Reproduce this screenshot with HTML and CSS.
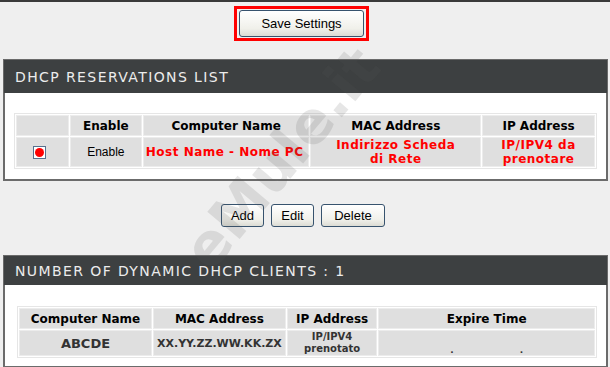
FILE: index.html
```html
<!DOCTYPE html>
<html lang="en">
<head>
    <meta charset="UTF-8">
    <title>DHCP Reservations</title>
    <link rel="stylesheet" href="styles.css">
</head>
<body>
    <div class="page">
        <div class="save-row">
            <div class="highlight-box">
                <button class="btn btn-save">Save Settings</button>
            </div>
        </div>

        <div class="panel panel-reservations">
            <div class="panel-header">DHCP RESERVATIONS LIST</div>
            <div class="panel-body">
                <table class="grid grid-res">
                    <tr class="head">
                        <td class="c-check"></td>
                        <td class="c-enable">Enable</td>
                        <td class="c-name">Computer Name</td>
                        <td class="c-mac">MAC Address</td>
                        <td class="c-ip">IP Address</td>
                    </tr>
                    <tr class="data">
                        <td><span class="check"><span class="dot"></span></span></td>
                        <td class="plain">Enable</td>
                        <td class="red left">Host Name - Nome PC</td>
                        <td class="red">Indirizzo Scheda<br>di Rete</td>
                        <td class="red">IP/IPV4 da<br>prenotare</td>
                    </tr>
                </table>
            </div>
        </div>

        <div class="action-row">
            <button class="btn btn-small">Add</button>
            <button class="btn btn-small">Edit</button>
            <button class="btn btn-wide">Delete</button>
        </div>

        <div class="panel panel-clients">
            <div class="panel-header">NUMBER OF DYNAMIC DHCP CLIENTS : 1</div>
            <div class="panel-body">
                <table class="grid grid-clients">
                    <tr class="head">
                        <td class="k-name">Computer Name</td>
                        <td class="k-mac">MAC Address</td>
                        <td class="k-ip">IP Address</td>
                        <td class="k-exp">Expire Time</td>
                    </tr>
                    <tr class="data">
                        <td class="host">ABCDE</td>
                        <td class="small">XX.YY.ZZ.WW.KK.ZX</td>
                        <td class="tiny">IP/IPV4<br>prenotato</td>
                        <td class="dots"><span>.</span><span>.</span></td>
                    </tr>
                </table>
            </div>
        </div>

        <div class="watermark">eMule.it</div>
    </div>
</body>
</html>
```

FILE: styles.css
```css
* {
    margin: 0;
    padding: 0;
    box-sizing: border-box;
}

body {
    background: #efefef;
    font-family: 'DejaVu Sans', Verdana, sans-serif;
    overflow: hidden;
}

.page {
    position: relative;
    width: 610px;
    height: 367px;
    border-top: 2px solid #3a3a3a;
    overflow: hidden;
}

.save-row {
    display: flex;
    justify-content: center;
    padding: 4px 7px 0 0;
}

.highlight-box {
    border: 3px solid #ff0000;
    padding: 1px 2px;
}

.btn {
    font-family: 'Liberation Sans', Tahoma, sans-serif;
    font-size: 13px;
    color: #000;
    background: linear-gradient(#ffffff, #f0f0ea 70%, #dcdcd4);
    border: 1px solid #37536e;
    border-radius: 3px;
    height: 23px;
    cursor: pointer;
}

.btn-save {
    width: 125px;
    height: 27px;
}

.panel {
    margin: 0 2px 0 3px;
}

.panel-reservations {
    margin-top: 18px;
}

.panel-header {
    background: #3d4041;
    color: #ececec;
    font-family: 'DejaVu Sans', sans-serif;
    font-size: 14px;
    letter-spacing: 1.4px;
    padding-left: 11px;
    display: flex;
    align-items: center;
    height: 34px;
    border: 1px solid #6a6a6a;
    border-bottom: none;
}

.panel-clients .panel-header {
    height: 30px;
}

.panel-body {
    background: #fff;
    border: 2px solid #6b6b6b;
    border-top: none;
    padding: 20px 9px 10px 9px;
}

.panel-clients .panel-body {
    padding: 21px 9px 8px 12px;
}

.grid {
    width: 100%;
    border-collapse: separate;
    border-spacing: 1px;
    background: #fff;
    border: 1px solid #e6e6e6;
    font-size: 12px;
}

.grid td {
    background: #dfdfdf;
    border: 1px solid #ececec;
    text-align: center;
    vertical-align: middle;
    padding: 0;
}

.grid .head td {
    font-weight: bold;
    height: 21px;
    color: #000;
}

.grid-res .data td {
    height: 28px;
}

.c-check { width: 53px; }
.c-enable { width: 72px; }
.c-name { width: 167px; }
.c-mac { width: 171px; }
.c-ip { width: 113px; }

.check {
    display: inline-block;
    width: 13px;
    height: 13px;
    border: 1px solid #56708e;
    background: #fff;
    vertical-align: middle;
    position: relative;
    margin-right: 6px;
}

.dot {
    position: absolute;
    left: 1px;
    top: 1px;
    width: 9px;
    height: 9px;
    border-radius: 50%;
    background: #ff0000;
}

.plain {
    font-family: 'Liberation Sans', Tahoma, sans-serif;
    font-size: 12px;
}

.red {
    color: #ff0000;
    font-weight: bold;
    font-size: 12px;
    letter-spacing: 0.5px;
    line-height: 14px;
}

.left {
    text-align: left !important;
    padding-left: 2px !important;
}

.action-row {
    display: flex;
    justify-content: center;
    gap: 7px;
    padding: 23px 0 28px 0;
    margin-left: -4px;
}

.btn-small {
    width: 43px;
}

.btn-wide {
    width: 64px;
}

.k-name { width: 134px; }
.k-mac { width: 133px; }
.k-ip { width: 91px; }
.k-exp { width: 219px; }

.grid-clients .data td {
    height: 24px;
    color: #333;
    font-weight: bold;
}

.host {
    font-size: 13px;
}

.small {
    font-size: 11px;
}

.tiny {
    font-size: 10px;
    line-height: 12px;
}

.dots {
    vertical-align: bottom !important;
    font-size: 9px;
    line-height: 9px;
}

.dots span {
    display: inline-block;
    margin: 0 33px;
}

.watermark {
    position: absolute;
    left: 148px;
    top: 122px;
    font-family: 'DejaVu Sans', sans-serif;
    font-weight: bold;
    font-size: 58px;
    color: rgba(90, 90, 90, 0.15);
    transform: rotate(-50deg);
    pointer-events: none;
    white-space: nowrap;
}
```
